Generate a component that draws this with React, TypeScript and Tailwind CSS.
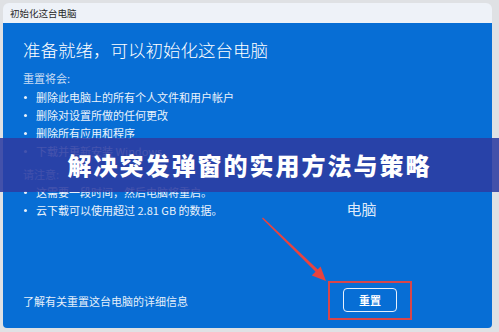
import React from "react";

const resetItems = [
  "删除此电脑上的所有个人文件和用户帐户",
  "删除对设置所做的任何更改",
  "删除所有应用和程序",
  "下载并重新安装 Windows",
];

const Bullet = ({ children }: { children: React.ReactNode }) => (
  <div className="flex items-center h-[18px]">
    <span className="w-[3px] h-[3px] rounded-full bg-[#e9f1fb] ml-[1px] mr-[9px]" />
    <span>{children}</span>
  </div>
);

export default function App() {
  return (
    <div
      className="relative w-[499px] h-[332px] overflow-hidden bg-[#dfe1e4]"
      style={{ fontFamily: '"Noto Sans CJK SC", "Noto Sans", sans-serif' }}
    >
      {/* dialog window */}
      <div className="ml-[3px] mr-[7px] mt-[3px] h-[325px] flex flex-col rounded-t-[6px] overflow-hidden">
        <div className="h-[20px] shrink-0 bg-[#eef2f8] flex items-center px-[7px] text-[9.5px] text-[#2b2b2b]">
          初始化这台电脑
        </div>

        <div className="flex-1 flex flex-col bg-[#076ed5] rounded-b-[4px] px-[20px] pt-[14px] pb-[8px] text-[#eaf2fb]">
          <h1 className="text-[17.5px] leading-[26px] font-light text-white">
            准备就绪，可以初始化这台电脑
          </h1>

          <div className="mt-[6px] text-[11px] leading-[18px] text-[#c9ddf4]">重置将会:</div>
          <div className="mt-[1px] text-[11px]">
            {resetItems.map((t) => (
              <Bullet key={t}>{t}</Bullet>
            ))}
          </div>

          <div className="mt-[5px] text-[11px] leading-[18px] text-[#c9ddf4]">请注意:</div>
          <div className="text-[11px]">
            <Bullet>这需要一段时间，然后电脑将重启。</Bullet>
            <div className="flex items-center h-[19px]">
              <span className="w-[3px] h-[3px] rounded-full bg-[#e9f1fb] ml-[1px] mr-[9px]" />
              <span>云下载可以使用超过 2.81 GB 的数据。</span>
              <span className="ml-[124px] text-[15px] text-[#dfeafa] -mt-[3px]">电脑</span>
            </div>
          </div>

          {/* footer */}
          <div className="mt-auto flex items-center">
            <span className="text-[11px] text-[#e4eefa] mt-[2px]">了解有关重置这台电脑的详细信息</span>
            <div className="ml-auto mr-[60px] border-2 border-[#d8464a] px-[13px] pt-[5px] pb-[6px]">
              <div className="w-[54px] h-[24px] rounded-[4px] border-[1.5px] border-[#e8f1fc] flex items-center justify-center text-[11px] font-bold text-white">
                重置
              </div>
            </div>
          </div>
        </div>
      </div>

      {/* title banner over the screenshot */}
      <div className="absolute left-0 right-0 top-[138px] h-[54px] bg-[rgba(46,60,162,0.88)] flex items-center justify-center">
        <span className="text-[24px] font-black text-white tracking-[2px] leading-none">
          解决突发弹窗的实用方法与策略
        </span>
      </div>

      {/* red arrow */}
      <svg className="absolute inset-0 pointer-events-none" width="499" height="332" viewBox="0 0 499 332">
        <polygon points="262,218.5 263,217.5 318.6,270.2 316.4,272.5" fill="#e8433f" />
        <polygon points="326,281 311.8,275.6 320.6,266.6" fill="#e8433f" />
      </svg>
    </div>
  );
}
